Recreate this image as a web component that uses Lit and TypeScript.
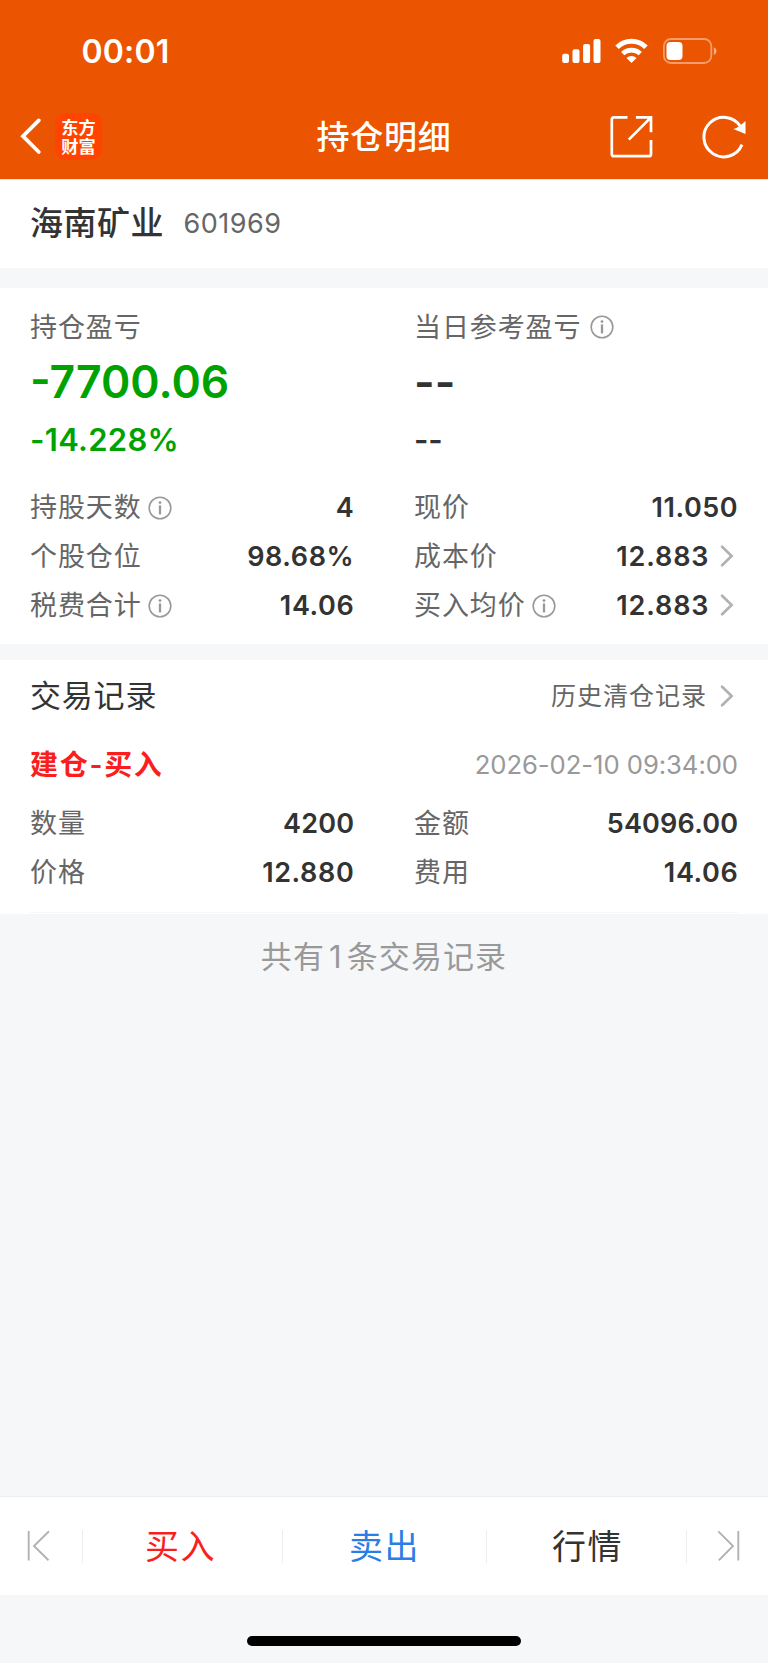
import { LitElement, html, css, nothing } from "lit";
import { customElement, property } from "lit/decorators.js";

const infoIcon = html`<svg class="info" width="24" height="24" viewBox="0 0 24 24" fill="none">
  <circle cx="12" cy="12" r="10.8" stroke="#999" stroke-width="1.6" />
  <circle cx="12" cy="6.6" r="1.4" fill="#999" />
  <path d="M12 9.4V18.4" stroke="#999" stroke-width="2.3" />
</svg>`;

const chevronIcon = html`<svg class="chevron" width="14" height="22" viewBox="0 0 14 22" fill="none">
  <path d="M2.1 1.8L11.6 11L2.1 20.2" stroke="#b2b2b2" stroke-width="2.7" stroke-linecap="round" />
</svg>`;

type Spacing = "tight" | "normal" | "wide";

@customElement("data-row")
export class DataRow extends LitElement {
  @property() label = "";
  @property() value = "";
  @property() spacing: Spacing = "normal";
  @property({ type: Boolean }) info = false;
  @property({ type: Boolean }) link = false;

  static styles = css`
    :host { display: flex; height: 49px; line-height: 49px; align-items: center; }
    .label { font-size: 27px; letter-spacing: 0.9px; color: #666; white-space: nowrap; padding-top: 2px; }
    .info { display: block; margin: 2px 0 0 6px; flex: none; }
    .value { margin-left: auto; margin-right: -0.3px; padding-top: 1px; font-size: 27px; font-weight: 600; color: #333; white-space: nowrap; }
    .tight { letter-spacing: 0.2px; }
    .normal { letter-spacing: 0.6px; }
    .wide { letter-spacing: 0.85px; }
    .chevron { display: block; flex: none; margin: 0 4px 0 11px; }
  `;

  render() {
    return html`
      <span class="label">${this.label}</span>
      ${this.info ? infoIcon : nothing}
      <span class="value ${this.spacing}">${this.value}</span>
      ${this.link ? chevronIcon : nothing}
    `;
  }
}

@customElement("app-root")
export class AppRoot extends LitElement {
  static styles = css`
    :host {
      display: flex; flex-direction: column; width: 768px; height: 1663px;
      background: #f6f7f9; color: #333; overflow: hidden;
      font-family: "Inter", "Noto Sans CJK SC", sans-serif;
    }
    svg { display: block; flex: none; }
    header { background: #eb5502; color: #fff; height: 179px; flex: none; border-bottom: 1px solid #fce6da; box-sizing: content-box; }
    .status { display: flex; align-items: center; height: 93px; box-sizing: border-box; padding: 10px 51.5px 0 81.5px; }
    .status svg { margin-top: -0.6px; }
    .time { font-size: 32px; font-weight: 600; margin-right: auto; line-height: 40px; padding-top: 1px; letter-spacing: 0.2px; }
    .wifi { margin: 0 15px 0 14px; }
    .nav { display: grid; grid-template-columns: 1fr auto 1fr; align-items: center; height: 86px; padding: 0 21px 0 20px; }
    .back { display: flex; align-items: center; gap: 13px; }
    .logo {
      display: flex; flex-direction: column; align-items: center; width: 47px; height: 47px; box-sizing: border-box;
      padding-top: 4px; border-radius: 10px; background: #ff4400;
      font: 700 17.2px/19.4px "Noto Sans CJK SC", sans-serif;
    }
    .title { font-size: 33px; font-weight: 500; letter-spacing: 0.8px; line-height: 50px; padding: 1px 0 0 1px; }
    .tools { display: flex; justify-content: flex-end; align-items: center; gap: 49px; padding-top: 1px; }
    .stock { display: flex; align-items: center; height: 88px; padding: 0 30px 0; line-height: 84px; background: #fff; flex: none; }
    .stock .name { font-size: 33px; font-weight: 500; letter-spacing: 0.5px; margin-top: -2px; }
    .stock .code { font-size: 27px; letter-spacing: 0.5px; color: #666; margin-left: 19.6px; }
    .card { background: #fff; flex: none; padding: 0 30px; }
    .summary { margin-top: 20px; height: 356px; box-sizing: border-box; padding-top: 19px; }
    .cols { display: grid; grid-template-columns: 324px 324px; column-gap: 60px; }
    .head { display: flex; align-items: center; height: 40px; line-height: 40px; font-size: 27px; letter-spacing: 0.9px; color: #666; }
    .head span { padding-top: 2px; }
    .head .info { margin-left: 9px; }
    .big { height: 70px; line-height: 71px; font-size: 44.5px; font-weight: 600; }
    .pct { height: 65px; line-height: 45px; font-size: 31px; font-weight: 600; letter-spacing: 0.3px; }
    .pct.none { letter-spacing: -0.2px; }
    .down { color: #00a200; }
    .records { margin-top: 16px; height: 254px; box-sizing: border-box; padding-top: 11px; }
    .bar { display: flex; align-items: center; justify-content: space-between; height: 49px; line-height: 49px; }
    .bar h2 { margin: 0; font-size: 31px; font-weight: 400; letter-spacing: 0.8px; }
    .history { display: flex; align-items: center; font-size: 25px; letter-spacing: 1px; color: #666; }
    .history span { padding-top: 2px; }
    .history .chevron { margin: 0 4px 0 13px; }
    .trade { margin-top: 20px; height: 49px; line-height: 50px; }
    .kind { font-size: 28px; font-weight: 600; letter-spacing: 1.7px; color: #fa1e1e; }
    .date { font-size: 25.7px; letter-spacing: -0.07px; color: #999; }
    .records .cols { margin-top: 9px; padding-bottom: 16px; border-bottom: 1px solid #f6f7f9; }
    .count { margin-top: 18px; text-align: center; line-height: 49px; font-size: 31px; letter-spacing: 1.1px; color: #999; flex: none; }
    .num { margin: 0 4px; }
    footer {
      margin-top: auto; display: grid; grid-template-columns: 82px 200px 204px 200px 82px; align-items: center;
      height: 98px; border-top: 1px solid #eee; background: #fff; flex: none; line-height: 98px; text-align: center;
      font-size: 34px; letter-spacing: 1.4px;
    }
    .act { height: 33px; line-height: 33px; border-left: 1px solid #eee; }
    .act.last { border-right: 1px solid #eee; padding-left: 2px; margin-right: -1px; }
    .buy { color: #fa1e1e; padding-right: 4px; }
    .sell { color: #2b7ee6; }
    .prev { margin-left: 26.5px; }
    .next { margin-left: 31px; }
    .home { height: 68px; flex: none; display: flex; justify-content: center; }
    .home i { margin-top: 41px; width: 274px; height: 10px; border-radius: 5px; background: #000; }
  `;

  render() {
    return html`
      <header>
        <div class="status">
          <span class="time">00:01</span>
          <svg width="39" height="26" viewBox="561.5 38 39 26" fill="#fff">
            <rect x="561.7" y="53.7" width="6.8" height="9.3" rx="2" />
            <rect x="572" y="49.3" width="7" height="13.7" rx="2" />
            <rect x="582.6" y="44" width="7" height="19" rx="2" />
            <rect x="593" y="39" width="7" height="24" rx="2" />
          </svg>
          <svg class="wifi" width="33" height="26" viewBox="614.5 38 33 26" fill="none" stroke="#fff" stroke-width="5">
            <path d="M616.5 47.3A20.7 20.7 0 0 1 645.5 47.3" />
            <path d="M622.2 53.6A12.8 12.8 0 0 1 639.8 53.6" stroke-width="4.6" />
            <path d="M631 63L626 57.9A7.4 7.4 0 0 1 636 57.9Z" fill="#fff" stroke="none" />
          </svg>
          <svg width="54" height="26" viewBox="662.5 38 54 26" fill="none">
            <rect x="663.4" y="39" width="47.4" height="24" rx="7" stroke="#fff" stroke-opacity=".42" stroke-width="1.8" />
            <rect x="666" y="42" width="16" height="18" rx="4" fill="#fff" />
            <path d="M713.3 47.2C716.9 48.6 716.9 53.6 713.3 55Z" fill="#fff" fill-opacity=".5" />
          </svg>
        </div>
        <div class="nav">
          <div class="back">
            <svg width="22" height="38" viewBox="20 117 22 38" fill="none" stroke="#fff" stroke-width="3.8">
              <path d="M38.8 120.4L23 136.2L38.8 152" stroke-linecap="round" stroke-linejoin="miter" />
            </svg>
            <div class="logo"><span>东方</span><span>财富</span></div>
          </div>
          <div class="title">持仓明细</div>
          <div class="tools">
            <svg width="43" height="44" viewBox="609.5 115 43 44" fill="none" stroke="#fff" stroke-width="2.7">
              <path d="M627 117.4H613.6Q611.3 117.4 611.3 119.7V153.9Q611.3 156.2 613.6 156.2H648.2Q650.5 156.2 650.5 153.9V140" />
              <path d="M635.4 117.4H650.5V132.2M650.5 117.4L628.3 139.6" />
            </svg>
            <svg width="45" height="44" viewBox="702 114.5 45 44" fill="none">
              <path d="M742 144.2A19.8 19.8 0 1 1 740.5 126" stroke="#fff" stroke-width="3" />
              <path d="M745.5 120.6V133.4L733.3 128.6Q737.8 127.8 745.5 120.6Z" fill="#fff" />
            </svg>
          </div>
        </div>
      </header>

      <section class="stock"><span class="name">海南矿业</span><span class="code">601969</span></section>

      <section class="card summary">
        <div class="cols">
          <div>
            <div class="head"><span>持仓盈亏</span></div>
            <div class="big down">-7700.06</div>
            <div class="pct down">-14.228%</div>
            <data-row label="持股天数" info value="4"></data-row>
            <data-row label="个股仓位" value="98.68%"></data-row>
            <data-row label="税费合计" info value="14.06"></data-row>
          </div>
          <div>
            <div class="head"><span>当日参考盈亏</span>${infoIcon}</div>
            <div class="big">--</div>
            <div class="pct none">--</div>
            <data-row label="现价" value="11.050"></data-row>
            <data-row label="成本价" value="12.883" spacing="wide" link></data-row>
            <data-row label="买入均价" info value="12.883" spacing="wide" link></data-row>
          </div>
        </div>
      </section>

      <section class="card records">
        <div class="bar">
          <h2>交易记录</h2>
          <div class="history"><span>历史清仓记录</span>${chevronIcon}</div>
        </div>
        <div class="bar trade"><span class="kind">建仓-买入</span><span class="date">2026-02-10 09:34:00</span></div>
        <div class="cols">
          <div>
            <data-row label="数量" value="4200" spacing="tight"></data-row>
            <data-row label="价格" value="12.880"></data-row>
          </div>
          <div>
            <data-row label="金额" value="54096.00" spacing="tight"></data-row>
            <data-row label="费用" value="14.06"></data-row>
          </div>
        </div>
      </section>

      <div class="count">共有<span class="num">1</span>条交易记录</div>

      <footer>
        <svg class="prev" width="24" height="32" viewBox="27 1530 24 32" fill="none" stroke="#b2b2b2" stroke-width="1.9">
          <path d="M28.7 1531V1560.5M49 1531.3L34 1546L48.5 1560.3" />
        </svg>
        <div class="act buy">买入</div>
        <div class="act sell">卖出</div>
        <div class="act last">行情</div>
        <svg class="next" width="24" height="32" viewBox="717 1530 24 32" fill="none" stroke="#b2b2b2" stroke-width="1.9">
          <path d="M738.3 1531V1560.5M718.3 1531.3L733 1546L718.8 1560.3" />
        </svg>
      </footer>
      <div class="home"><i></i></div>
    `;
  }
}
